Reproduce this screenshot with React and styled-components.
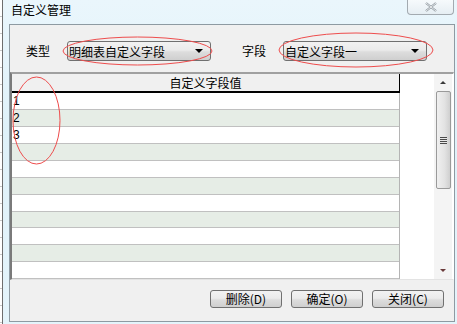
import React from "react";
import styled, { createGlobalStyle } from "styled-components";

const Global = createGlobalStyle`
  html, body { margin: 0; padding: 0; background: #ffffff; }
  body { font-family: "Noto Sans CJK SC", "Liberation Sans", sans-serif; }
`;

const Page = styled.div`
  position: relative;
  width: 457px;
  height: 324px;
  display: flex;
  overflow: hidden;
`;

const BehindStrip = styled.div`
  width: 2px;
  height: 100%;
  background: repeating-linear-gradient(#ffffff 0 16px, #c8c8c8 16px 17px);
  border-right: 1px solid #6e6e6e;
`;

const Window = styled.div`
  flex: 1;
  display: flex;
  flex-direction: column;
  background: linear-gradient(180deg, #eaf6fc 0%, #dff1f9 40%, #e4f4fb 100%);
`;

const TitleBar = styled.div`
  height: 24px;
  display: flex;
  align-items: flex-start;
  padding-left: 8px;
  padding-right: 3px;
`;

const Title = styled.div`
  font-size: 12px;
  line-height: 12px;
  padding-top: 4px;
  color: #000;
`;

const CloseButton = styled.div`
  margin-left: auto;
  width: 45px;
  height: 14px;
  border: 1px solid #a3aab0;
  border-top: none;
  border-radius: 0 0 4px 4px;
  background: linear-gradient(#f6fafc, #e6eef3);
  display: flex;
  align-items: center;
  justify-content: center;
`;

const Panel = styled.div`
  flex: 1;
  margin: 0 2px 2px 6px;
  border: 1px solid #8e9aa2;
  background: #f0f0f0;
  display: flex;
  flex-direction: column;
`;

const Toolbar = styled.div`
  height: 47px;
  display: flex;
  align-items: flex-start;
  padding-top: 16px;
  padding-left: 16px;
  box-sizing: border-box;
`;

const Label = styled.div`
  font-size: 12px;
  line-height: 20px;
  color: #000;
  width: 23px;
  margin-right: ${(p) => p.$gap}px;
  white-space: nowrap;
`;

const Combo = styled.div`
  width: 144px;
  height: 20px;
  box-sizing: border-box;
  border: 1px solid #707070;
  border-radius: 3px;
  background: linear-gradient(#f2f2f2 0%, #ebebeb 45%, #dddddd 55%, #cfcfcf 100%);
  display: flex;
  align-items: center;
  padding-left: 1px;
  margin-right: ${(p) => p.$gap || 0}px;
  font-size: 12px;
  color: #000;
`;

const ComboText = styled.span`
  flex: 1;
  white-space: nowrap;
`;

const Arrow = styled.span`
  width: 0;
  height: 0;
  border-left: 4px solid transparent;
  border-right: 4px solid transparent;
  border-top: 4px solid #000;
  margin-right: 7px;
`;

const Grid = styled.div`
  height: 208px;
  box-sizing: border-box;
  border-top: 2px solid #a0a0a0;
  border-left: 2px solid #7a7a7a;
  border-right: 1px solid #ffffff;
  border-bottom: 1px solid #e3e3e3;
  background: #ffffff;
  display: flex;
`;

const TableCol = styled.div`
  width: 387px;
  display: flex;
  flex-direction: column;
  border-right: 1px solid #b4b4b4;
`;

const Header = styled.div`
  height: 19px;
  box-sizing: border-box;
  background: #f0f0f0;
  border-bottom: 2px solid #000;
  border-right: 1px solid #000;
  margin-right: -1px;
  font-size: 12px;
  line-height: 17px;
  text-align: center;
  color: #000;
`;

const Row = styled.div`
  height: 17px;
  box-sizing: border-box;
  border-bottom: 1px solid #c0c0c0;
  background: ${(p) => (p.$alt ? "#e6ede6" : "#ffffff")};
  font-family: "Liberation Sans", sans-serif;
  font-size: 12px;
  line-height: 16px;
  padding-left: 1px;
  color: #000;
`;

const Filler = styled.div`
  flex: 1;
  background: #ffffff;
`;

const ScrollBar = styled.div`
  width: 18px;
  display: flex;
  flex-direction: column;
  align-items: center;
  background: #f4f4f4;
  margin-right: 1px;
`;

const ScrollArrow = styled.div`
  height: 17px;
  width: 100%;
  display: flex;
  align-items: center;
  justify-content: center;
`;

const ArrowGlyph = styled.span`
  width: 0;
  height: 0;
  border-left: 3px solid transparent;
  border-right: 3px solid transparent;
  ${(p) =>
    p.$down
      ? "border-top: 3px solid #6a3a3a;"
      : "border-bottom: 3px solid #3a3a3a;"}
`;

const Thumb = styled.div`
  width: 15px;
  height: 98px;
  box-sizing: border-box;
  border: 1px solid #9a9a9a;
  border-radius: 2px;
  background: linear-gradient(90deg, #f0f0f0, #e2e2e2 60%, #cfcfcf);
  display: flex;
  align-items: center;
  justify-content: center;
`;

const Grip = styled.div`
  width: 7px;
  height: 7px;
  background: repeating-linear-gradient(#4a4a4a 0 1px, #e8e8e8 1px 2px);
`;

const TrackSpace = styled.div`
  flex: 1;
`;

const ButtonBar = styled.div`
  display: flex;
  justify-content: flex-end;
  gap: 9px;
  padding-top: 10px;
  padding-right: 10px;
`;

const Button = styled.div`
  width: 72px;
  height: 18px;
  box-sizing: border-box;
  border: 1px solid #707070;
  border-radius: 3px;
  background: linear-gradient(#f2f2f2 0%, #ebebeb 45%, #dddddd 55%, #cfcfcf 100%);
  font-size: 12px;
  line-height: 16px;
  text-align: center;
  color: #000;
`;

const Overlay = styled.svg`
  position: absolute;
  left: 0;
  top: 0;
  pointer-events: none;
`;

const rows = ["1", "2", "3", "", "", "", "", "", "", "", ""];

export default function App() {
  return (
    <>
      <Global />
      <Page>
        <BehindStrip />
        <Window>
          <TitleBar>
            <Title>自定义管理</Title>
            <CloseButton>
              <svg width="14" height="10" viewBox="0 0 14 10">
                <path d="M2 1 L12 9 M12 1 L2 9" stroke="#8a949c" strokeWidth="2.2" />
                <path d="M2 1 L12 9 M12 1 L2 9" stroke="#ffffff" strokeWidth="0.8" />
              </svg>
            </CloseButton>
          </TitleBar>
          <Panel>
            <Toolbar>
              <Label $gap={18}>类型</Label>
              <Combo $gap={31}>
                <ComboText>明细表自定义字段</ComboText>
                <Arrow />
              </Combo>
              <Label $gap={18}>字段</Label>
              <Combo>
                <ComboText>自定义字段一</ComboText>
                <Arrow />
              </Combo>
            </Toolbar>
            <Grid>
              <TableCol>
                <Header>自定义字段值</Header>
                {rows.map((r, i) => (
                  <Row key={i} $alt={i % 2 === 1}>
                    {r}
                  </Row>
                ))}
              </TableCol>
              <Filler />
              <ScrollBar>
                <ScrollArrow>
                  <ArrowGlyph />
                </ScrollArrow>
                <Thumb>
                  <Grip />
                </Thumb>
                <TrackSpace />
                <ScrollArrow>
                  <ArrowGlyph $down />
                </ScrollArrow>
              </ScrollBar>
            </Grid>
            <ButtonBar>
              <Button>删除(D)</Button>
              <Button>确定(O)</Button>
              <Button>关闭(C)</Button>
            </ButtonBar>
          </Panel>
        </Window>
        <Overlay width="457" height="324">
          <ellipse cx="137.5" cy="51" rx="74.5" ry="14" fill="none" stroke="#ee4c4c" strokeWidth="1" />
          <ellipse cx="356" cy="50" rx="77" ry="17" fill="none" stroke="#ee4c4c" strokeWidth="1" />
          <ellipse cx="36.5" cy="120.5" rx="23.5" ry="43.5" fill="none" stroke="#ee4c4c" strokeWidth="1" />
        </Overlay>
      </Page>
    </>
  );
}
